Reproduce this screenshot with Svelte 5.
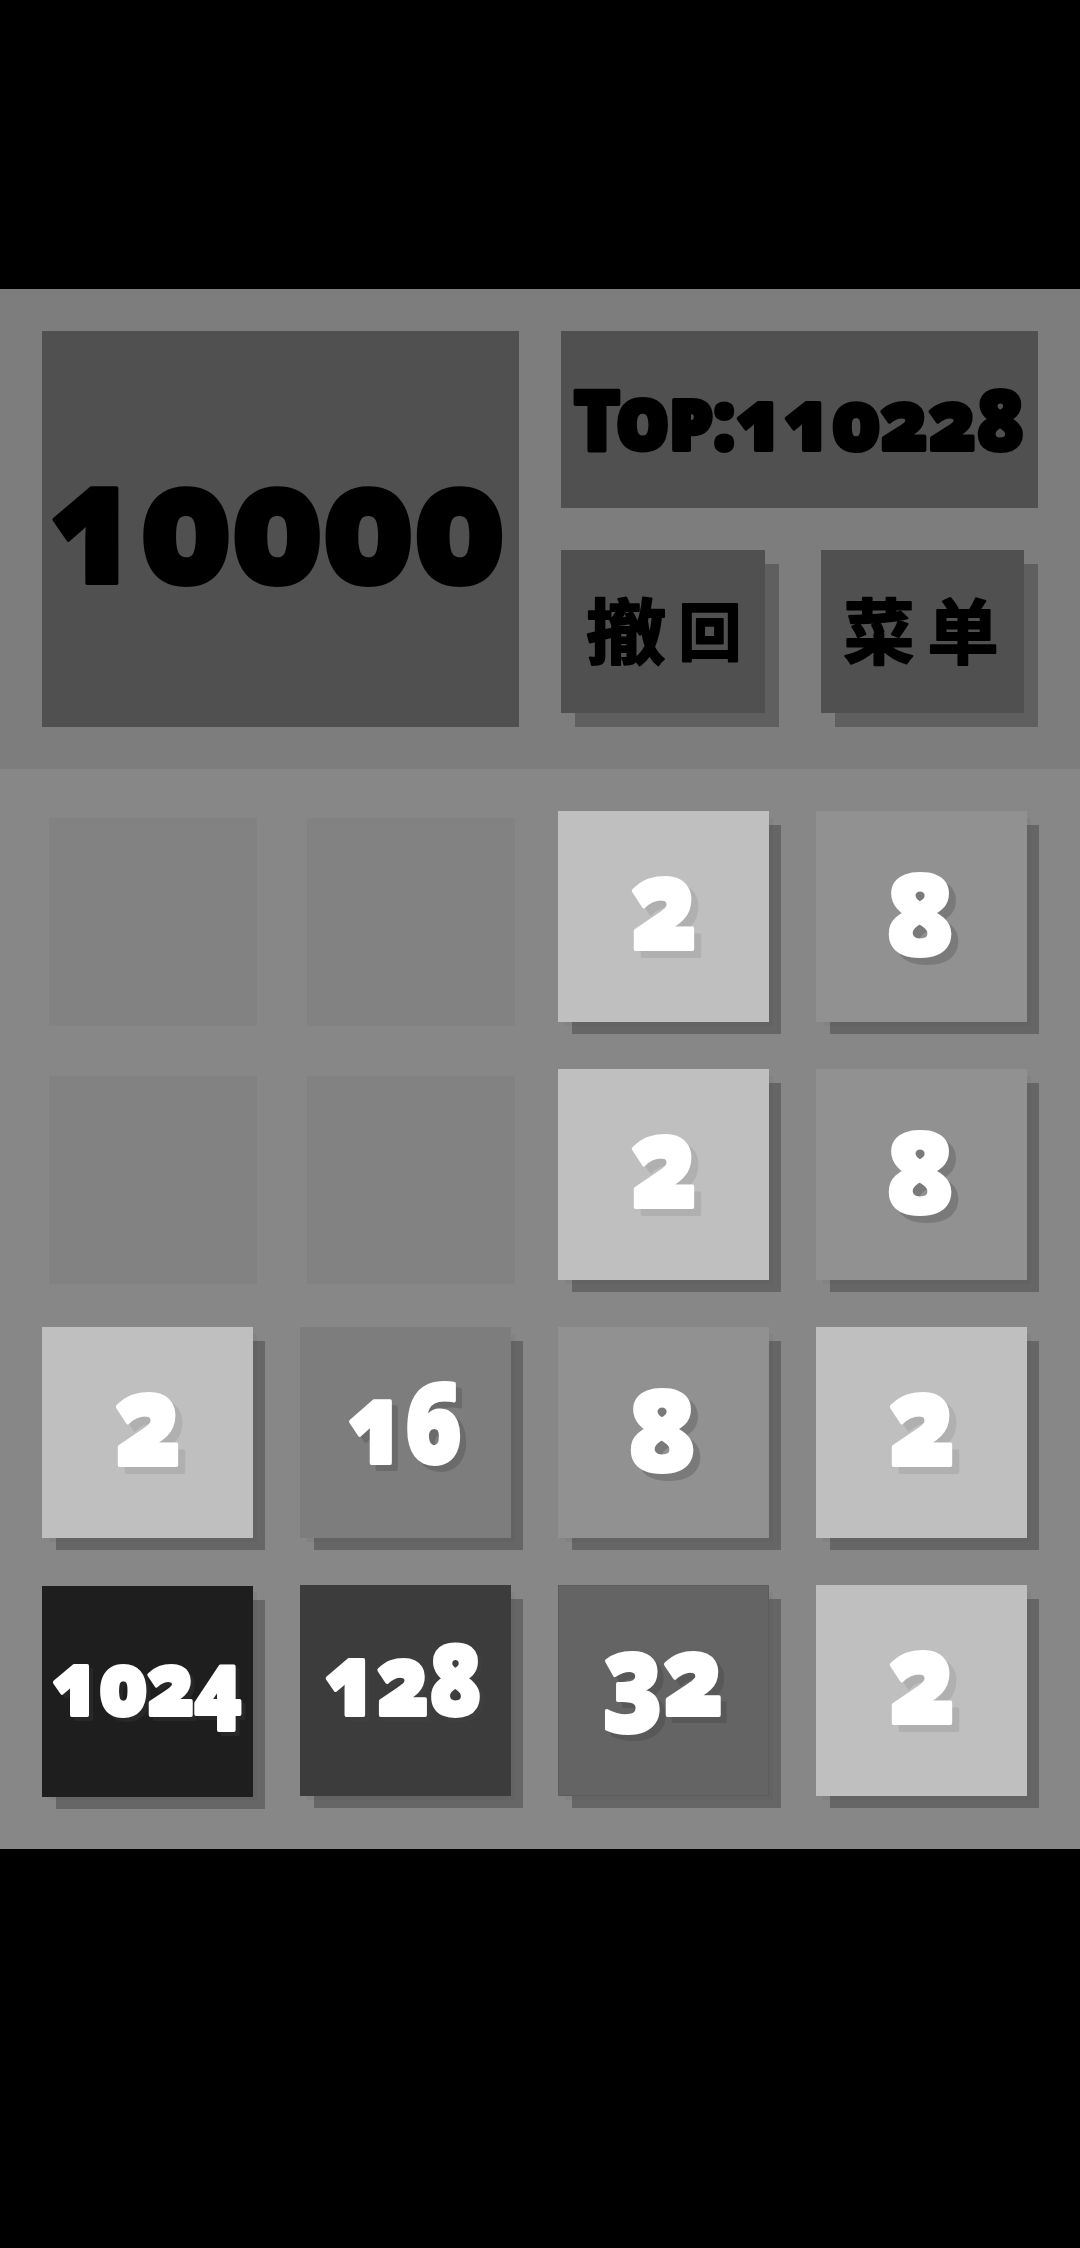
<script>
  const score = 10000
  const top = 110228

  const board = [
    [0, 0, 2, 8],
    [0, 0, 2, 8],
    [2, 16, 8, 2],
    [1024, 128, 32, 2],
  ]

  // label of each tile: font size, centre, baseline, length and the drop of its shadow
  const tiles = {
    2: { size: 126, x: 106, y: 138, width: 67, drop: 7, shade: '#b0b0b0' },
    8: { size: 112, x: 104, y: 144, width: 68, drop: 7, shade: '#7a7a7a' },
    16: { size: 110, x: 105, y: 136, width: 115, drop: 6, shade: '#6b6b6b' },
    32: { size: 110, x: 105, y: 130, width: 121, drop: 6, shade: '#585858' },
    128: { size: 97, x: 103, y: 130, width: 157, drop: 4, shade: '#3f3f3f' },
    1024: { size: 86, x: 105, y: 129, width: 190, drop: 4, shade: '#282828' },
  }
</script>

<div class="screen">
  <header>
    <div class="score">
      <svg width="477" height="396">
        <text x="235" y="252" textLength="456" lengthAdjust="spacingAndGlyphs">{score}</text>
      </svg>
    </div>
    <div class="top">
      <svg width="477" height="177">
        <text x="238" y="119" textLength="451" lengthAdjust="spacingAndGlyphs">Top:{top}</text>
      </svg>
    </div>
    <div class="actions">
      <button>
        <svg width="203" height="163">
          <text x="65" y="108" textLength="80" lengthAdjust="spacingAndGlyphs">撤</text>
          <text class="small" x="149" y="105">回</text>
        </svg>
      </button>
      <button>
        <svg width="203" height="163">
          <text x="58 142" y="108">菜单</text>
        </svg>
      </button>
    </div>
  </header>

  <main>
    {#each board as row}
      {#each row as value}
        <div class="cell">
          {#if value}
            {@const t = tiles[value]}
            <div class="tile t{value}">
              <svg
                width="210"
                height="210"
                style="font-size: {t.size}px; filter: drop-shadow({t.drop}px {t.drop}px 0 {t.shade})"
              >
                <text x={t.x} y={t.y} textLength={t.width} lengthAdjust="spacingAndGlyphs">{value}</text>
              </svg>
            </div>
          {/if}
        </div>
      {/each}
    {/each}
  </main>
</div>

<style>
  :global(body) {
    background: #000;
  }

  .screen {
    width: 1080px;
    height: 2248px;
    box-sizing: border-box;
    padding: 289px 0 399px;
    background: #000;
    font-family: 'Noto Sans', 'Noto Sans CJK SC', sans-serif;
    font-weight: 900;
    font-variant-numeric: oldstyle-nums;
  }

  header {
    display: grid;
    grid-template-columns: 477px 477px;
    grid-template-rows: 177px 177px;
    gap: 42px;
    padding: 42px;
    background: #7d7d7d;
  }

  svg {
    display: block;
    overflow: visible;
  }

  text {
    text-anchor: middle;
    fill: #000;
    stroke: #000;
    stroke-width: 4px;
    stroke-linejoin: round;
  }

  .score {
    grid-row: span 2;
    background: #505050;
    font-size: 169px;
  }

  .score text {
    stroke-width: 4px;
  }

  .top {
    background: #505050;
    font-size: 84px;
    font-variant-caps: small-caps;
  }

  .actions {
    display: grid;
    grid-template-columns: 1fr 1fr;
    gap: 56px;
    padding: 0 14px 14px 0;
  }

  button {
    margin: 0;
    padding: 0;
    border: 0;
    background: #505050;
    box-shadow: 14px 14px 0 #5f5f5f;
    font-family: 'Noto Sans CJK SC', sans-serif;
    font-size: 71px;
    font-weight: 700;
  }

  button text {
    stroke-width: 2px;
  }

  .small {
    font-size: 63px;
  }

  main {
    display: grid;
    grid-template-columns: repeat(4, 208px);
    grid-auto-rows: 208px;
    gap: 50px;
    padding: 49px;
    background: #878787;
  }

  .cell {
    background: #828282;
  }

  .tile {
    width: 210.5px;
    height: 210.5px;
    margin: -7px 0 0 -7px;
    box-shadow: 13px 13px 0 -1px rgba(0, 0, 0, 0.24);
  }

  .tile text {
    fill: #fff;
    stroke: #fff;
  }

  .t2 {
    background: #bfbfbf;
  }

  .t8 {
    background: #919191;
  }

  .t16 {
    background: #7d7d7d;
  }

  .t32 {
    background: #646464;
    outline: 1px solid rgba(0, 0, 0, 0.08);
    outline-offset: -1px;
  }

  .t128 {
    background: #3c3c3c;
  }

  .t1024 {
    margin-top: -6px;
    background: #1e1e1e;
  }
</style>
